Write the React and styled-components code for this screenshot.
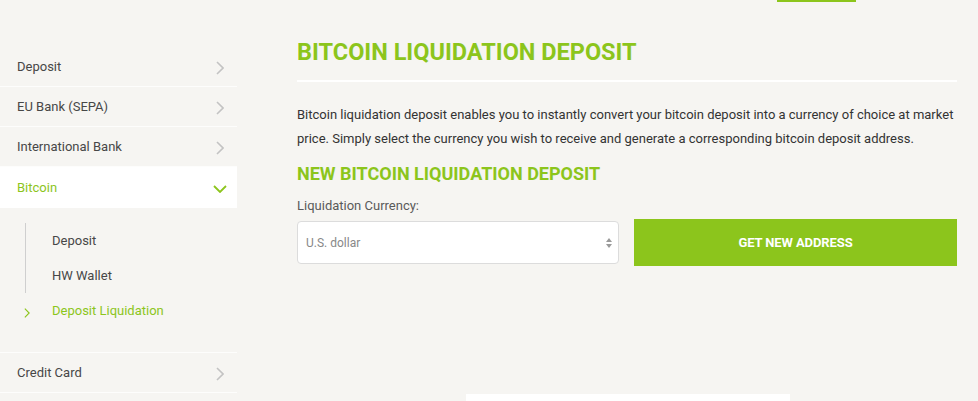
import styled, { createGlobalStyle } from "styled-components";

const GREEN = "#8cc51c";

const GlobalStyle = createGlobalStyle`
  html, body {
    margin: 0;
    padding: 0;
    background: #f6f5f2;
    font-family: Roboto, "Liberation Sans", Arial, sans-serif;
    color: #3c3c3c;
  }
  * { box-sizing: border-box; }
`;

const Chevron = ({ down, color = "#c3c3c3" }) => (
  <svg width={down ? 14 : 8} height={down ? 8 : 14} viewBox={down ? "0 0 14 8" : "0 0 8 14"}>
    {down ? (
      <path d="M1 1 L7 7 L13 1" fill="none" stroke={color} strokeWidth="1.8" />
    ) : (
      <path d="M1 1 L7 7 L1 13" fill="none" stroke={color} strokeWidth="1.6" />
    )}
  </svg>
);

const App = () => {
  return (
    <>
      <GlobalStyle />
      <TopStrip>
        <TabMark />
      </TopStrip>
      <Page>
        <Sidebar>
          <NavItem>Deposit<Chevron /></NavItem>
          <NavItem>EU Bank (SEPA)<Chevron /></NavItem>
          <NavItem>International Bank<Chevron /></NavItem>
          <NavItem active>
            Bitcoin
            <Chevron down color={GREEN} />
          </NavItem>
          <SubMenu>
            <SubLine />
            <SubItem>Deposit</SubItem>
            <SubItem>HW Wallet</SubItem>
            <SubItem current>
              <SubMark><Chevron color={GREEN} /></SubMark>
              Deposit Liquidation
            </SubItem>
          </SubMenu>
          <NavItem>Credit Card<Chevron /></NavItem>
        </Sidebar>
        <Main>
          <Title>BITCOIN LIQUIDATION DEPOSIT</Title>
          <Divider />
          <Text>
            Bitcoin liquidation deposit enables you to instantly convert your bitcoin deposit into a currency of choice at market
            price. Simply select the currency you wish to receive and generate a corresponding bitcoin deposit address.
          </Text>
          <SubTitle>NEW BITCOIN LIQUIDATION DEPOSIT</SubTitle>
          <Label>Liquidation Currency:</Label>
          <FormRow>
            <Select>
              U.S. dollar
              <svg width="6" height="10" viewBox="0 0 6 10">
                <path d="M3 0 L6 4 L0 4 Z" fill="#9a9a9a" />
                <path d="M3 10 L6 6 L0 6 Z" fill="#9a9a9a" />
              </svg>
            </Select>
            <Button>GET NEW ADDRESS</Button>
          </FormRow>
          <NextCard />
        </Main>
      </Page>
    </>
  );
};

const TopStrip = styled.div`
  height: 2px;
  display: flex;
`;

const TabMark = styled.div`
  margin-left: 777px;
  width: 79px;
  height: 2px;
  background: ${GREEN};
`;

const Page = styled.div`
  display: flex;
  align-items: flex-start;
`;

const Sidebar = styled.nav`
  width: 237px;
  flex-shrink: 0;
  padding-top: 45px;
  display: flex;
  flex-direction: column;
`;

const NavItem = styled.div`
  height: ${(p) => (p.active ? "41px" : "40px")};
  display: flex;
  align-items: center;
  justify-content: space-between;
  padding: 0 10px 0 17px;
  font-size: 13px;
  color: ${(p) => (p.active ? GREEN : "#474747")};
  background: ${(p) => (p.active ? "#ffffff" : "transparent")};
  border-bottom: 1px solid ${(p) => (p.active ? "#ffffff" : "#fdfdfc")};
  svg { margin-top: 3px; margin-right: ${(p) => (p.active ? "0" : "3px")}; }
`;

const SubMenu = styled.div`
  position: relative;
  display: flex;
  flex-direction: column;
  padding: 15px 0 24px 52px;
  border-bottom: 1px solid #fdfdfc;
`;

const SubLine = styled.div`
  position: absolute;
  left: 25px;
  top: 15px;
  width: 1px;
  height: 70px;
  background: #cfcfcf;
`;

const SubItem = styled.div`
  position: relative;
  height: 35px;
  display: flex;
  align-items: center;
  font-size: 13px;
  color: ${(p) => (p.current ? GREEN : "#474747")};
`;

const SubMark = styled.span`
  position: absolute;
  left: -28px;
  top: 13px;
  svg { width: 6px; height: 10px; }
`;

const Main = styled.main`
  flex: 1;
  padding: 0 21px 0 60px;
  display: flex;
  flex-direction: column;
`;

const Title = styled.h1`
  margin: 34px 0 0;
  font-size: 23.5px;
  font-weight: 700;
  line-height: 32px;
  color: ${GREEN};
`;

const Divider = styled.div`
  height: 2px;
  margin-top: 12px;
  background: #ffffff;
`;

const Text = styled.p`
  margin: 21px 0 0;
  font-size: 13px;
  line-height: 24px;
  color: #333;
`;

const SubTitle = styled.h2`
  margin: 11px 0 0;
  font-size: 18px;
  font-weight: 700;
  line-height: 24px;
  color: ${GREEN};
`;

const Label = styled.div`
  margin-top: 12px;
  font-size: 13px;
  line-height: 16px;
  color: #5a5a5a;
`;

const FormRow = styled.div`
  margin-top: 5px;
  display: flex;
  align-items: center;
  gap: 15px;
`;

const Select = styled.div`
  width: 322px;
  height: 43px;
  background: #fff;
  border: 1px solid #dcdcdc;
  border-radius: 4px;
  display: flex;
  align-items: center;
  justify-content: space-between;
  padding: 0 6px 0 8px;
  font-size: 12px;
  color: #888;
`;

const Button = styled.button`
  flex: 1;
  height: 47px;
  border: 0;
  background: ${GREEN};
  color: #fff;
  font-family: Roboto, "Liberation Sans", Arial, sans-serif;
  font-weight: 700;
  font-size: 13px;
  letter-spacing: -0.1px;
`;

const NextCard = styled.div`
  margin: 128px 0 0 169px;
  width: 324px;
  height: 10px;
  background: #fff;
`;

export default App;
